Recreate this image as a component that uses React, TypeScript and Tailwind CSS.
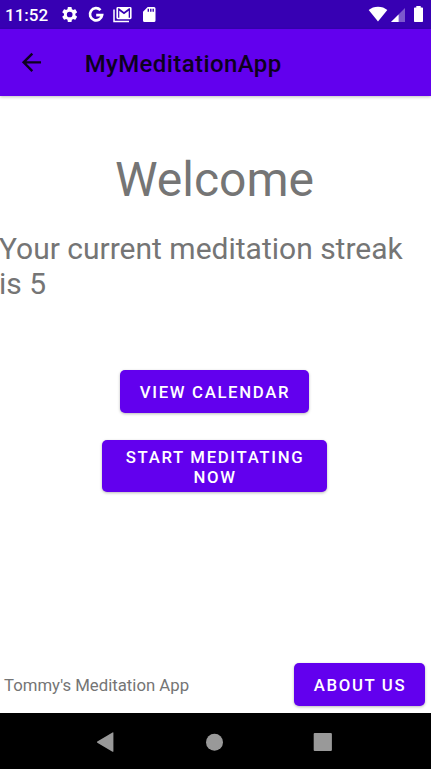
import type { ReactNode } from 'react';

function ContainedButton({ className, children }: { className: string; children: ReactNode }) {
  return (
    <button
      className={`flex items-center justify-center rounded-[5px] bg-[#6200ee] text-center text-[16.76px] leading-[20px] font-medium tracking-[1.66px] text-white uppercase shadow-[0_1px_3px_rgba(0,0,0,0.28)] ${className}`}
    >
      {children}
    </button>
  );
}

function StatusBar() {
  return (
    <div className="flex h-[29px] shrink-0 items-center bg-[#3700b3] text-white">
      <span className="w-[56px] pl-[5px] text-[17px] leading-[20px] font-medium">11:52</span>
      <svg className="h-[29px] w-[120px]" viewBox="56 0 120 29" fill="currentColor">
        <g transform="translate(60.2 5) scale(0.79)">
          <path d="M19.14 12.94c.04-.3.06-.61.06-.94 0-.32-.02-.64-.07-.94l2.03-1.58a.49.49 0 0 0 .12-.61l-1.92-3.32a.488.488 0 0 0-.59-.22l-2.39.96c-.5-.38-1.03-.7-1.62-.94l-.36-2.54a.484.484 0 0 0-.48-.41h-3.84c-.24 0-.43.17-.47.41l-.36 2.54c-.59.24-1.13.57-1.62.94l-2.39-.96c-.22-.08-.47 0-.59.22L2.74 8.87c-.12.21-.08.47.12.61l2.03 1.58c-.05.3-.09.63-.09.94s.02.64.07.94l-2.03 1.58a.49.49 0 0 0-.12.61l1.92 3.32c.12.22.37.29.59.22l2.39-.96c.5.38 1.03.7 1.62.94l.36 2.54c.05.24.24.41.48.41h3.84c.24 0 .44-.17.47-.41l.36-2.54c.59-.24 1.13-.56 1.62-.94l2.39.96c.22.08.47 0 .59-.22l1.92-3.32a.49.49 0 0 0-.12-.61l-2.01-1.58zM12 15.6A3.6 3.6 0 1 1 12 8.4a3.6 3.6 0 0 1 0 7.2z" />
        </g>
        <path
          d="M100.5 10.1A6.1 6.1 0 1 0 102.1 15.1H96.2"
          fill="none"
          stroke="currentColor"
          strokeWidth="2.7"
        />
        <path d="M114 9.5V21.4H129" fill="none" stroke="currentColor" strokeWidth="1.5" />
        <path
          fillRule="evenodd"
          d="M117.8 7H130.2Q131.6 7 131.6 8.4V17.8Q131.6 19.2 130.2 19.2H117.8Q116.4 19.2 116.4 17.8V8.4Q116.4 7 117.8 7ZM118.1 8.2V17.8H119.3V10.8L124 14.2L128.7 10.8V17.8H130V8.2H129L124 12L119 8.2Z"
        />
        <path
          fillRule="evenodd"
          d="M147.7 7H154Q155.5 7 155.5 8.5V20.5Q155.5 22 154 22H144.5Q143 22 143 20.5V11.7ZM147.6 8.7V11.7H149V8.7ZM150.1 8.7V11.7H151.5V8.7ZM152.5 8.7V11.7H153.9V8.7Z"
        />
      </svg>
      <svg className="ml-auto h-[29px] w-[66px]" viewBox="365 0 66 29" fill="currentColor">
        <path d="M378 21.5L368.7 10.1C371.1 8 374.4 6.8 378 6.8S384.9 8 387.3 10.1Z" />
        <path d="M391 22L405 8V22Z" opacity=".35" />
        <path d="M391 22L398.6 14.4V22Z" />
        <path d="M416.3 7.4V6H420.7V7.4H422.2Q423 7.4 423 8.2V21.2Q423 22 422.2 22H414.8Q414 22 414 21.2V8.2Q414 7.4 414.8 7.4Z" />
      </svg>
    </div>
  );
}

function AppBar() {
  return (
    <header className="z-10 flex h-[67px] shrink-0 items-center bg-[#6200ee] pl-[17px] text-[#0d001f] shadow-[0_1px_3px_rgba(0,0,0,0.25)]">
      <svg className="h-[28.7px] w-[28.7px]" viewBox="-0.1 0 24 24" fill="currentColor">
        <path d="M20 11H7.83l5.59-5.59L12 4l-8 8 8 8 1.41-1.41L7.83 13H20v-2z" />
      </svg>
      <h1 className="mt-[2px] ml-[39px] text-[24px] leading-[28px] font-medium tracking-[0.4px]">MyMeditationApp</h1>
    </header>
  );
}

function NavigationBar() {
  return (
    <nav className="flex h-[56px] shrink-0 bg-black text-[#999999]">
      <svg className="h-[56px] w-[431px]" viewBox="0 0 431 56" fill="currentColor">
        <path d="M113.4 19.8V38.2Q113.4 39.2 112.5 38.7L97.3 29.8Q96.5 29.2 97.3 28.6L112.5 19.6Q113.4 19 113.4 19.8Z" />
        <circle cx="214.5" cy="29.2" r="8.5" />
        <rect x="313.7" y="20" width="18.2" height="18" rx="1" />
      </svg>
    </nav>
  );
}

export default function App() {
  return (
    <div className="flex h-[769px] w-[431px] flex-col overflow-hidden bg-white font-[Roboto,sans-serif]">
      <StatusBar />
      <AppBar />
      <main className="flex flex-1 flex-col items-center text-[#757575]">
        <h2 className="mt-[56px] -ml-[2px] text-[48px] leading-[56px]">Welcome</h2>
        <p className="mt-[23px] -ml-px w-[432px] text-[30px] leading-[35.3px]">
          Your current meditation streak is 5
        </p>
        <ContainedButton className="mt-[68px] mr-[2px] h-[43.5px] w-[189px] pt-[2px] pl-px">
          View Calendar
        </ContainedButton>
        <ContainedButton className="mt-[26.5px] mr-[2px] h-[52px] w-[225px] pt-[2px] pr-[18px] pl-[19px]">
          Start meditating now
        </ContainedButton>
        <footer className="mt-auto mb-[7px] flex w-full items-center justify-between pr-[6px] pl-[4px]">
          <span className="pt-px text-[16.76px] leading-[20px]">Tommy's Meditation App</span>
          <ContainedButton className="h-[43.5px] w-[131px] pt-px pl-px">About us</ContainedButton>
        </footer>
      </main>
      <NavigationBar />
    </div>
  );
}
